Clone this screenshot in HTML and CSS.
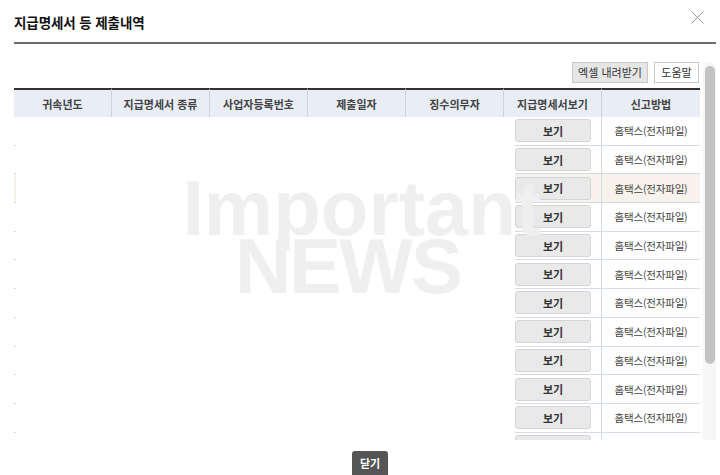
FILE: index.html
```html
<!DOCTYPE html>
<html lang="ko">
<head>
<meta charset="utf-8">
<title>지급명세서 등 제출내역</title>
<link rel="stylesheet" href="styles.css">
</head>
<body>
<div class="modal">
  <header class="modal-head">
    <h1 class="title">지급명세서 등 제출내역</h1>
    <button class="close-x" aria-label="닫기">
      <svg width="13" height="13" viewBox="0 0 13 13"><path d="M0.5 0.5L12.5 12.5M12.5 0.5L0.5 12.5" stroke="#9a9a9a" stroke-width="1" fill="none"/></svg>
    </button>
  </header>
  <div class="modal-body">
    <div class="scroll">
      <div class="toolbar">
        <button class="btn btn-gray">엑셀 내려받기</button>
        <button class="btn btn-white">도움말</button>
      </div>
      <div class="table-wrap">
        <table class="grid">
          <colgroup>
            <col class="c1"><col class="c2"><col class="c3"><col class="c4"><col class="c5"><col class="c6"><col class="c7">
          </colgroup>
          <thead>
            <tr>
              <th>귀속년도</th><th>지급명세서 종류</th><th>사업자등록번호</th><th>제출일자</th><th>징수의무자</th><th>지급명세서보기</th><th>신고방법</th>
            </tr>
          </thead>
          <tbody>
            <tr><td></td><td></td><td></td><td></td><td></td><td><button class="view">보기</button></td><td class="method">홈택스(전자파일)</td></tr>
            <tr><td></td><td></td><td></td><td></td><td></td><td><button class="view">보기</button></td><td class="method">홈택스(전자파일)</td></tr>
            <tr class="hover"><td></td><td></td><td></td><td></td><td></td><td><button class="view">보기</button></td><td class="method">홈택스(전자파일)</td></tr>
            <tr><td></td><td></td><td></td><td></td><td></td><td><button class="view">보기</button></td><td class="method">홈택스(전자파일)</td></tr>
            <tr><td></td><td></td><td></td><td></td><td></td><td><button class="view">보기</button></td><td class="method">홈택스(전자파일)</td></tr>
            <tr><td></td><td></td><td></td><td></td><td></td><td><button class="view">보기</button></td><td class="method">홈택스(전자파일)</td></tr>
            <tr><td></td><td></td><td></td><td></td><td></td><td><button class="view">보기</button></td><td class="method">홈택스(전자파일)</td></tr>
            <tr><td></td><td></td><td></td><td></td><td></td><td><button class="view">보기</button></td><td class="method">홈택스(전자파일)</td></tr>
            <tr><td></td><td></td><td></td><td></td><td></td><td><button class="view">보기</button></td><td class="method">홈택스(전자파일)</td></tr>
            <tr><td></td><td></td><td></td><td></td><td></td><td><button class="view">보기</button></td><td class="method">홈택스(전자파일)</td></tr>
            <tr><td></td><td></td><td></td><td></td><td></td><td><button class="view">보기</button></td><td class="method">홈택스(전자파일)</td></tr>
            <tr><td></td><td></td><td></td><td></td><td></td><td><button class="view">보기</button></td><td class="method">홈택스(전자파일)</td></tr>
          </tbody>
        </table>
        <div class="cover"></div>
        <div class="watermark"><span class="wm1">Important</span><span class="wm2">NEWS</span></div>
      </div>
    </div>
    <div class="scrollbar"><div class="thumb"></div></div>
  </div>
  <footer class="modal-foot">
    <button class="btn-close">닫기</button>
  </footer>
</div>
</body>
</html>
```

FILE: styles.css
```css
* { box-sizing: border-box; }
html, body { margin: 0; padding: 0; background: #fff; }
body {
  font-family: "Noto Sans CJK KR", "Noto Sans", sans-serif;
  color: #333;
  width: 720px;
  height: 475px;
  overflow: hidden;
}
button { font-family: inherit; cursor: pointer; }

.modal-head {
  display: flex;
  align-items: center;
  justify-content: space-between;
  height: 44px;
  margin: 0 4px 0 14px;
  border-bottom: 2px solid #6b6b6b;
  padding: 2px 0 0;
}
.title {
  margin: 0;
  font-size: 13.5px;
  font-weight: bold;
  color: #111;
  letter-spacing: -0.1px;
}
.close-x {
  border: 0;
  background: none;
  padding: 0;
  width: 13px;
  height: 13px;
  margin: -10px 12px 0 0;
  display: flex;
}

.modal-body {
  display: flex;
  margin-top: 16px;
  padding-left: 14px;
  height: 380px;
}
.scroll {
  width: 686px;
  height: 380px;
  overflow: hidden;
}
.scrollbar {
  width: 13px;
  margin-left: 3px;
  padding-top: 4px;
  background: #f6f6f6;
  margin-top: 2px;
  border-radius: 6px 6px 0 0;
}
.thumb {
  width: 10px;
  margin: 0 auto;
  height: 298px;
  background: #c3c3c3;
  border-radius: 5px;
}

.toolbar {
  display: flex;
  justify-content: flex-end;
  gap: 6px;
  padding: 2px 1px 0 0;
  height: 28px;
}
.btn {
  height: 21px;
  font-size: 11px;
  color: #333;
  border: 1px solid #c8c8c8;
  padding: 0;
  line-height: 19px;
}
.btn-gray { width: 76px; background: #e6e6e6; }
.btn-white { width: 45px; background: #fff; }

.table-wrap { position: relative; }
.grid {
  width: 686px;
  table-layout: fixed;
  border-collapse: separate;
  border-spacing: 0;
}
.c1 { width: 97px; }
.c2, .c3, .c4, .c5, .c6 { width: 98px; }
.c7 { width: 99px; }

.grid th {
  height: 29px;
  padding: 0;
  border-top: 2px solid #333;
  background: #e9eef6;
  border-left: 1px solid #ccd3de;
  font-size: 11px;
  font-weight: bold;
  color: #444;
  text-align: center;
  vertical-align: middle;
}
.grid th:first-child { border-left: 0; }
.grid td {
  height: 28.7px;
  padding: 0;
  border-bottom: 1px solid #d3dbe6;
  text-align: center;
  vertical-align: middle;
  font-size: 10.5px;
  color: #444;
}
.grid td.method { border-left: 1px solid #d3dbe6; letter-spacing: -0.2px; }
.grid tr.hover td { background: #f7f3ec; }

.view {
  width: 76px;
  height: 23px;
  background: #e9e9e9;
  border: 1px solid #d4d4d4;
  border-radius: 3px;
  font-size: 11px;
  font-weight: bold;
  color: #333;
  padding: 0;
  display: block;
  margin: 0 auto;
  position: relative;
  left: 1px;
}

.cover {
  position: absolute;
  left: 2px;
  top: 29px;
  width: 499px;
  bottom: 0;
  background: #fff;
}
.watermark {
  position: absolute;
  left: 134px;
  top: 91px;
  width: 400px;
  text-align: center;
  font-family: "Liberation Sans", Arial, sans-serif;
  font-weight: bold;
  font-size: 78px;
  line-height: 58px;
  color: #efefef;
  pointer-events: none;
}
.wm1 { display: block; padding-left: 28px; }
.wm2 { display: block; letter-spacing: -2px; }

.modal-foot {
  padding: 9px 0 0 20px;
  text-align: center;
}
.btn-close {
  width: 36px;
  height: 26px;
  border: 0;
  border-radius: 3px;
  background: #555;
  color: #fff;
  font-size: 11px;
  font-weight: bold;
  padding: 0 0 2px;
}
```
